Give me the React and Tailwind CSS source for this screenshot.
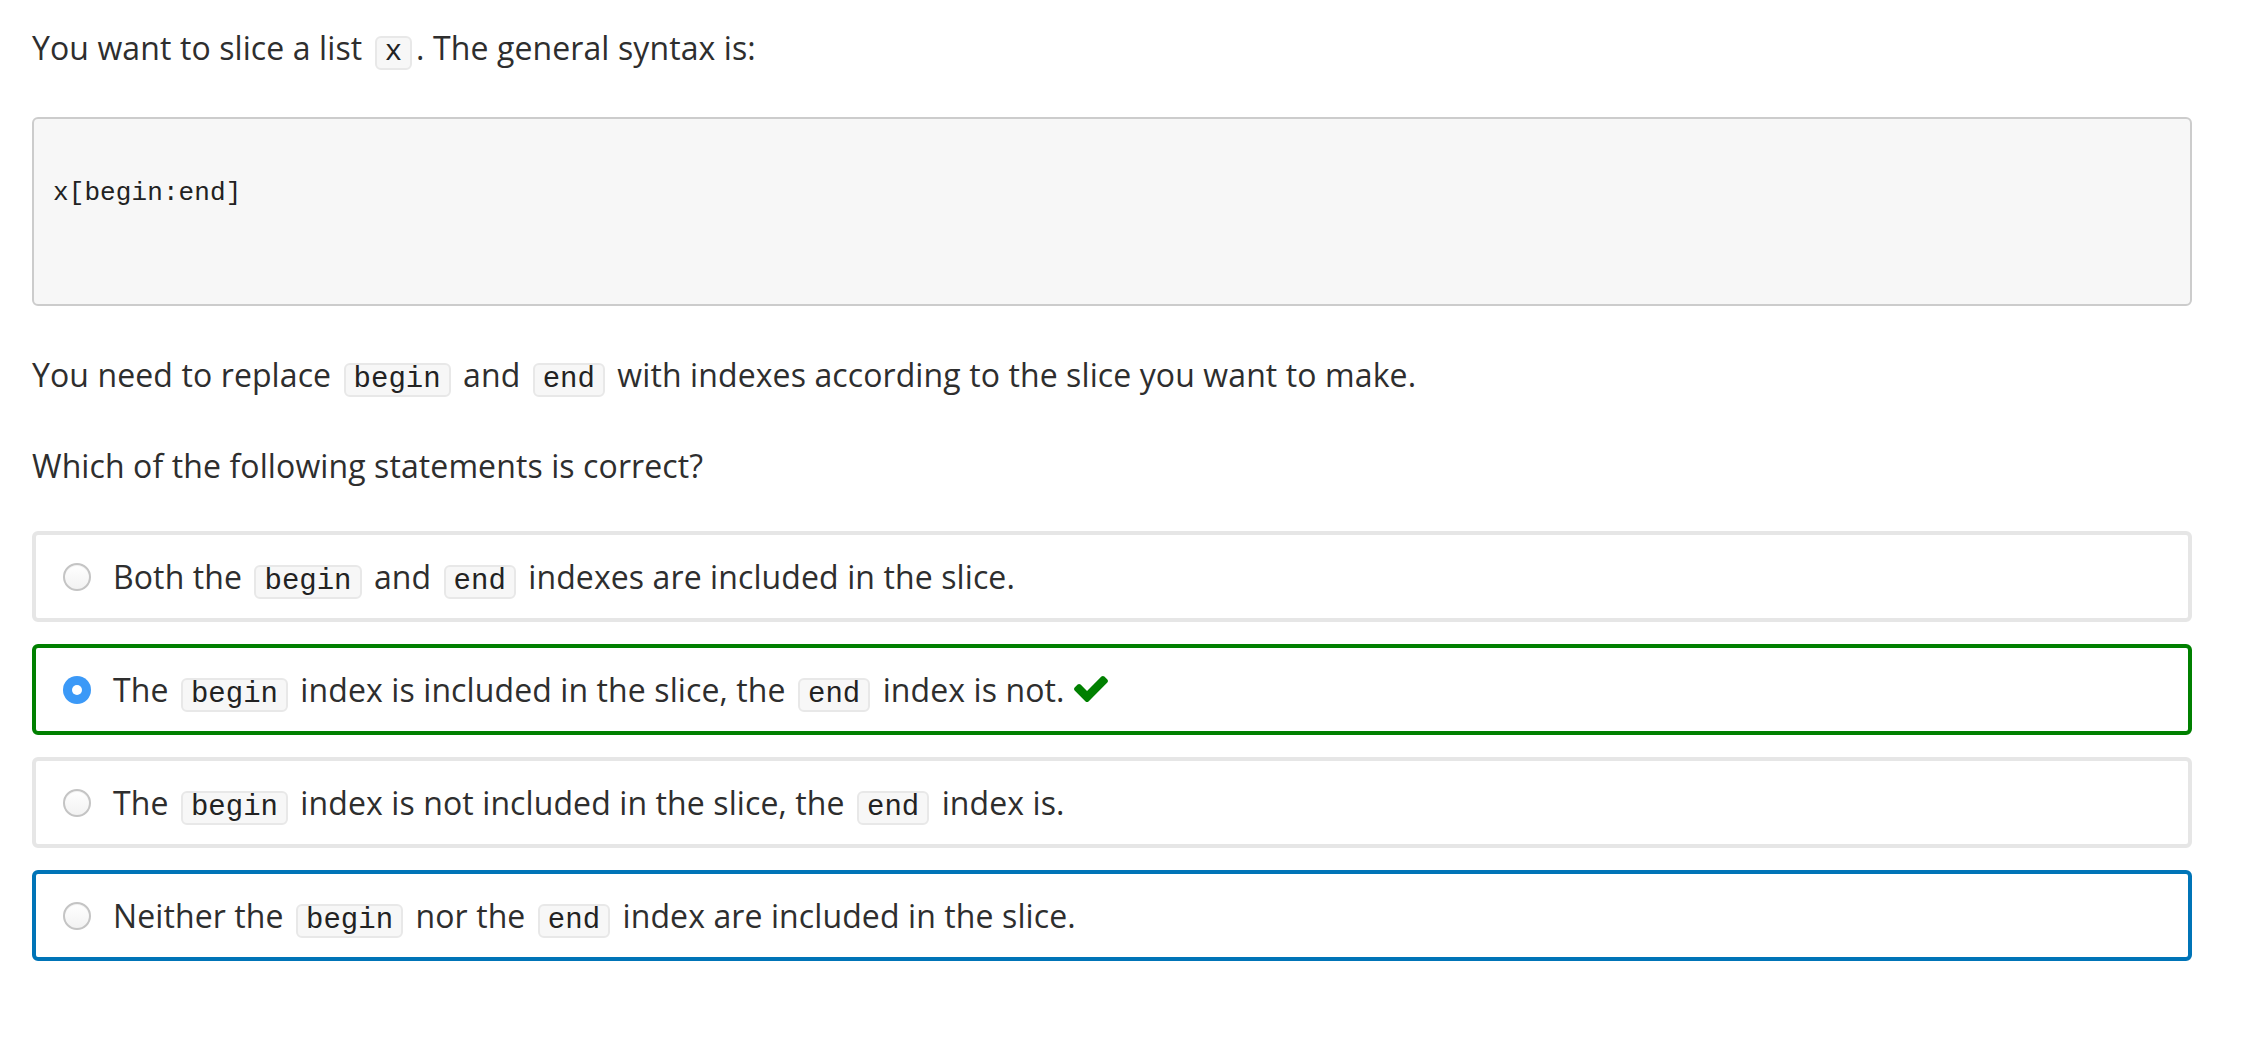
import React from 'react';

const Code = ({ children }) => (
  <code className="inline-block mx-[4px] px-[8px] border-2 border-[#e8e8e8] bg-[#f7f7f7] rounded-[6px] text-[29px] leading-[30px] tracking-normal text-[#222] font-['Liberation_Mono',monospace]">
    {children}
  </code>
);

const Check = () => (
  <svg viewBox="121 334 1550 1188" width="34" height="26" className="inline-block ml-[9px] align-baseline" fill="#008000">
    <path d="M1671 566q0 40-28 68l-724 724-136 136q-28 28-68 28t-68-28l-136-136-362-362q-28-28-28-68t28-68l136-136q28-28 68-28t68 28l294 295 656-657q28-28 68-28t68 28l136 136q28 28 28 68z" />
  </svg>
);

const Radio = ({ checked }) =>
  checked ? (
    <span className="w-[28px] h-[28px] shrink-0 rounded-full bg-[#3b99f7] flex items-center justify-center">
      <span className="w-[10px] h-[10px] rounded-full bg-white" />
    </span>
  ) : (
    <span className="w-[28px] h-[28px] shrink-0 rounded-full border-2 border-[#c4c4c4] bg-gradient-to-b from-white to-[#f2f2f2] shadow-[inset_0_1px_1px_rgba(0,0,0,0.05)]" />
  );

export default function App() {
  const options = [
    {
      border: 'border-[#e6e6e6]',
      content: (
        <>
          Both the <Code>begin</Code> and <Code>end</Code> indexes are included in the slice.
        </>
      ),
    },
    {
      border: 'border-[#008000]',
      checked: true,
      content: (
        <>
          The <Code>begin</Code> index is included in the slice, the <Code>end</Code> index is not.
          <Check />
        </>
      ),
    },
    {
      border: 'border-[#e6e6e6]',
      content: (
        <>
          The <Code>begin</Code> index is not included in the slice, the <Code>end</Code> index is.
        </>
      ),
    },
    {
      border: 'border-[#0074b7]',
      content: (
        <>
          Neither the <Code>begin</Code> nor the <Code>end</Code> index are included in the slice.
        </>
      ),
    },
  ];

  return (
    <div className="min-h-screen bg-white font-['Open_Sans',sans-serif] text-[32px] leading-[48px] tracking-[0.1px] text-[#2e2e2e]">
      <div className="w-[2160px] ml-[32px] pt-[24px]">
        <p>
          You want to slice a list <Code>x</Code>. The general syntax is:
        </p>

        <pre className="mt-[45px] h-[189px] border-2 border-[#cccccc] bg-[#f7f7f7] rounded-[6px] pl-[19px] pt-[56px] text-[26px] leading-[36px] text-[#222] font-['Liberation_Mono',monospace]">
          x[begin:end]
        </pre>

        <p className="mt-[45px]">
          You need to replace <Code>begin</Code> and <Code>end</Code> with indexes according to the slice you want to make.
        </p>

        <p className="mt-[43px]">Which of the following statements is correct?</p>

        <div className="mt-[41px] flex flex-col gap-[22px]">
          {options.map((o, i) => (
            <label
              key={i}
              className={`h-[91px] flex items-center gap-[22px] pl-[27px] border-4 rounded-[6px] bg-white ${o.border}`}
            >
              <Radio checked={o.checked} />
              <span className="whitespace-nowrap">{o.content}</span>
            </label>
          ))}
        </div>
      </div>
    </div>
  );
}
